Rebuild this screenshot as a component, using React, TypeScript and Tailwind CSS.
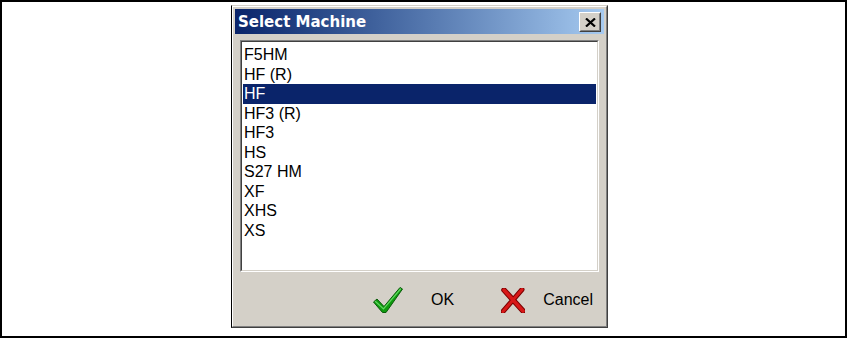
const machines = ["F5HM", "HF (R)", "HF", "HF3 (R)", "HF3", "HS", "S27 HM", "XF", "XHS", "XS"];

const CheckIcon = () => (
    <svg width="30" height="26" viewBox="0 0 30 26">
        <polygon points="0.5,15 4,12 11,19.5 27,0.5 29.5,2 13,25.5 9.5,25.5" fill="#0f9a0f" stroke="#0a5a0a" strokeWidth="1" strokeLinejoin="round" />
        <polyline points="2.5,14.5 10.5,22 27.5,2" fill="none" stroke="#5fd85f" strokeWidth="1.2" strokeLinecap="round" />
    </svg>
)

const CrossIcon = () => (
    <svg width="24" height="25" viewBox="0 0 24 25">
        <line x1="3" y1="2" x2="22" y2="23" stroke="#7a0000" strokeWidth="5.5" strokeLinecap="round" />
        <line x1="21" y1="1.5" x2="2" y2="23.5" stroke="#7a0000" strokeWidth="5" strokeLinecap="round" />
        <line x1="3" y1="2" x2="22" y2="23" stroke="#d81818" strokeWidth="3.5" strokeLinecap="round" />
        <line x1="21" y1="1.5" x2="2" y2="23.5" stroke="#d81818" strokeWidth="3" strokeLinecap="round" />
    </svg>
)

const App = () => {
    const selected = "HF";

    return (
        <div className="w-[847px] h-[338px] border-2 border-black bg-white pl-[229px] pt-[3px] font-['Liberation_Sans',Arial,sans-serif]">
            <div className="w-[377px] h-[323px] border border-t-[#d4d0c8] border-l-black border-r-[#404040] border-b-[#404040]">
                <div className="h-full flex flex-col border border-t-white border-l-white border-r-[#808080] border-b-[#808080] bg-[#d4d0c8] p-[2px]">
                    {/* title bar */}
                    <div className="h-[25px] flex items-center justify-between pl-[3px] pr-[3px] bg-gradient-to-r from-[#0a246a] to-[#a6caf0]">
                        <span className="pt-[2px] text-white font-bold text-[15px] font-['DejaVu_Sans',sans-serif] leading-none">Select Machine</span>
                        <button className="w-[22px] h-[20px] mt-[1px] border border-t-white border-l-white border-r-[#404040] border-b-[#404040] bg-[#d4d0c8]">
                            <div className="h-full flex items-center justify-center border border-t-[#d4d0c8] border-l-[#d4d0c8] border-r-[#808080] border-b-[#808080]">
                                <svg width="11" height="9" viewBox="0 0 11 9">
                                    <path d="M1 0.5 L10 8.5 M10 0.5 L1 8.5" stroke="black" strokeWidth="2.2" />
                                </svg>
                            </div>
                        </button>
                    </div>

                    {/* list */}
                    <div className="mx-[5px] mt-[6px] h-[232px] border border-t-[#808080] border-l-[#808080] border-r-white border-b-white">
                        <div className="h-full border border-t-[#404040] border-l-[#404040] border-r-[#d4d0c8] border-b-[#d4d0c8] bg-white pt-[3px] px-[1px]">
                            {machines.map((m) => (
                                <div
                                    key={m}
                                    className={m === selected
                                        ? "h-[19.5px] leading-[19.5px] pl-[1px] text-[16px] bg-[#0a246a] text-white"
                                        : "h-[19.5px] leading-[19.5px] pl-[1px] text-[16px] text-black"}
                                >
                                    {m}
                                </div>
                            ))}
                        </div>
                    </div>

                    {/* buttons */}
                    <div className="flex-1 flex items-center justify-end gap-[47px] pt-[4px] pr-[11px] text-[16px] text-black">
                        <button className="flex items-center gap-[28px]">
                            <CheckIcon />
                            <span>OK</span>
                        </button>
                        <button className="flex items-center gap-[18px]">
                            <CrossIcon />
                            <span>Cancel</span>
                        </button>
                    </div>
                </div>
            </div>
        </div>
    )
}

export default App
